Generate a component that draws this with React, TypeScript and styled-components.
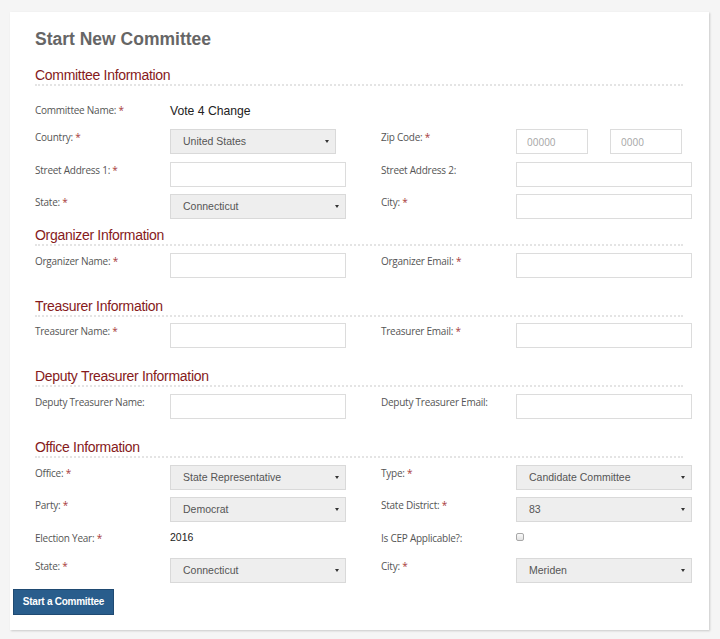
import React from "react";
import styled, { createGlobalStyle } from "styled-components";

const GlobalStyle = createGlobalStyle`
  html, body { margin: 0; padding: 0; background: #f5f5f5; }
  body { font-family: "Liberation Sans", Arial, sans-serif; }
  * { box-sizing: border-box; }
`;

const Card = styled.div`
  margin: 12px 11px 9px 10px;
  width: 699px;
  background: #fff;
  box-shadow: 1px 1px 2px rgba(0, 0, 0, 0.18);
  padding: 16px 17px 15px 3px;
`;

const Content = styled.div`
  padding-left: 22px;
`;

const Title = styled.h1`
  margin: 0 0 17px;
  font-family: "Liberation Sans", Arial, sans-serif;
  font-size: 17.5px;
  line-height: 22px;
  font-weight: bold;
  color: #666;
`;

const Section = styled.section<{ $top: number }>`
  margin-top: ${(p) => p.$top}px;
`;

const Heading = styled.h2`
  margin: 0 9px 0 0;
  font-family: "Liberation Sans", Arial, sans-serif;
  font-weight: normal;
  font-size: 14px;
  letter-spacing: -0.3px;
  line-height: 16px;
  color: #861a1b;
  padding-bottom: 1px;
  border-bottom: 2px dotted #e4e4e4;
`;

const Rows = styled.div<{ $top: number }>`
  margin-top: ${(p) => p.$top}px;
  display: flex;
  flex-direction: column;
  gap: 7.5px;
`;

const Row = styled.div<{ $h?: number }>`
  display: flex;
  gap: 35px;
  height: ${(p) => p.$h ?? 25}px;
`;

const Field = styled.div`
  display: flex;
  width: 311px;
`;

const Label = styled.div`
  width: 135px;
  flex: none;
  font-family: "Open Sans", sans-serif;
  font-size: 10px;
  letter-spacing: -0.25px;
  line-height: 14px;
  padding-top: 1px;
  color: #555;
`;

const Req = styled.span`
  color: #a83a3a;
`;

const Control = styled.div`
  width: 176px;
  display: flex;
  gap: 22px;
`;

const Input = styled.input<{ $w?: number }>`
  appearance: none;
  width: ${(p) => (p.$w ? `${p.$w}px` : "100%")};
  height: 25px;
  margin: 0;
  border: 1px solid #dcdcdc;
  background: #fff;
  padding: 0 10px;
  font-family: "Open Sans", sans-serif;
  font-size: 10px;
  color: #333;
  outline: none;
  &::placeholder { color: #a5a5a5; }
`;

const Select = styled.div<{ $w?: number }>`
  position: relative;
  width: ${(p) => (p.$w ? `${p.$w}px` : "100%")};
  height: 25px;
  border: 1px solid #d9d9d9;
  background: #eeeeee;
  padding: 0 12px;
  font-family: "Liberation Sans", Arial, sans-serif;
  font-size: 10.5px;
  line-height: 23px;
  color: #555;
`;

const Arrow = styled.span`
  position: absolute;
  right: 6px;
  top: 10px;
  width: 0;
  height: 0;
  border-left: 2px solid transparent;
  border-right: 2px solid transparent;
  border-top: 3px solid #333;
`;

const Value = styled.div<{ $size: number; $lh: number; $pt: number }>`
  font-family: "Liberation Sans", Arial, sans-serif;
  font-size: ${(p) => p.$size}px;
  line-height: ${(p) => p.$lh}px;
  padding-top: ${(p) => p.$pt}px;
  color: #222;
`;

const Check = styled.input`
  appearance: none;
  margin: 3px 0 0;
  width: 8px;
  height: 8px;
  border: 1px solid #a8a8a8;
  border-radius: 2px;
  background: linear-gradient(#fafafa, #e2e2e2);
`;

const Footer = styled.div`
  margin-top: 5.5px;
`;

const Button = styled.button`
  width: 101px;
  height: 26px;
  margin: 0;
  padding: 0;
  background: #295d8c;
  border: 1px solid #1f4a72;
  color: #fff;
  font-family: "Liberation Sans", Arial, sans-serif;
  font-weight: bold;
  font-size: 10px;
  letter-spacing: -0.25px;
  cursor: pointer;
`;

const L = ({ text, req }: { text: string; req?: boolean }) => (
  <Label>
    {text}
    {req && <Req> *</Req>}
  </Label>
);

const Sel = ({ value, w }: { value: string; w?: number }) => (
  <Select $w={w}>
    {value}
    <Arrow />
  </Select>
);

export default function App() {
  return (
    <>
      <GlobalStyle />
      <Card>
        <Content>
          <Title>Start New Committee</Title>

          <Section $top={0}>
            <Heading>Committee Information</Heading>
            <Rows $top={15.5}>
              <Row $h={20}>
                <Field>
                  <L text="Committee Name:" req />
                  <Value $size={12.2} $lh={14} $pt={2}>Vote 4 Change</Value>
                </Field>
              </Row>
              <Row>
                <Field>
                  <L text="Country:" req />
                  <Control>
                    <Sel value="United States" w={166} />
                  </Control>
                </Field>
                <Field>
                  <L text="Zip Code:" req />
                  <Control>
                    <Input $w={72} placeholder="00000" />
                    <Input $w={72} placeholder="0000" />
                  </Control>
                </Field>
              </Row>
              <Row>
                <Field>
                  <L text="Street Address 1:" req />
                  <Control>
                    <Input />
                  </Control>
                </Field>
                <Field>
                  <L text="Street Address 2:" />
                  <Control>
                    <Input />
                  </Control>
                </Field>
              </Row>
              <Row>
                <Field>
                  <L text="State:" req />
                  <Control>
                    <Sel value="Connecticut" />
                  </Control>
                </Field>
                <Field>
                  <L text="City:" req />
                  <Control>
                    <Input />
                  </Control>
                </Field>
              </Row>
            </Rows>
          </Section>

          <Section $top={8}>
            <Heading>Organizer Information</Heading>
            <Rows $top={6.5}>
              <Row>
                <Field>
                  <L text="Organizer Name:" req />
                  <Control>
                    <Input />
                  </Control>
                </Field>
                <Field>
                  <L text="Organizer Email:" req />
                  <Control>
                    <Input />
                  </Control>
                </Field>
              </Row>
            </Rows>
          </Section>

          <Section $top={20}>
            <Heading>Treasurer Information</Heading>
            <Rows $top={6.5}>
              <Row>
                <Field>
                  <L text="Treasurer Name:" req />
                  <Control>
                    <Input />
                  </Control>
                </Field>
                <Field>
                  <L text="Treasurer Email:" req />
                  <Control>
                    <Input />
                  </Control>
                </Field>
              </Row>
            </Rows>
          </Section>

          <Section $top={20}>
            <Heading>Deputy Treasurer Information</Heading>
            <Rows $top={6.5}>
              <Row>
                <Field>
                  <L text="Deputy Treasurer Name:" />
                  <Control>
                    <Input />
                  </Control>
                </Field>
                <Field>
                  <L text="Deputy Treasurer Email:" />
                  <Control>
                    <Input />
                  </Control>
                </Field>
              </Row>
            </Rows>
          </Section>

          <Section $top={20}>
            <Heading>Office Information</Heading>
            <Rows $top={7}>
              <Row>
                <Field>
                  <L text="Office:" req />
                  <Control>
                    <Sel value="State Representative" />
                  </Control>
                </Field>
                <Field>
                  <L text="Type:" req />
                  <Control>
                    <Sel value="Candidate Committee" />
                  </Control>
                </Field>
              </Row>
              <Row>
                <Field>
                  <L text="Party:" req />
                  <Control>
                    <Sel value="Democrat" />
                  </Control>
                </Field>
                <Field>
                  <L text="State District:" req />
                  <Control>
                    <Sel value="83" />
                  </Control>
                </Field>
              </Row>
              <Row $h={21}>
                <Field>
                  <L text="Election Year:" req />
                  <Value $size={10.5} $lh={11} $pt={2}>2016</Value>
                </Field>
                <Field>
                  <L text="Is CEP Applicable?:" />
                  <Control>
                    <Check type="checkbox" />
                  </Control>
                </Field>
              </Row>
              <Row>
                <Field>
                  <L text="State:" req />
                  <Control>
                    <Sel value="Connecticut" />
                  </Control>
                </Field>
                <Field>
                  <L text="City:" req />
                  <Control>
                    <Sel value="Meriden" />
                  </Control>
                </Field>
              </Row>
            </Rows>
          </Section>
        </Content>
        <Footer>
          <Button>Start a Committee</Button>
        </Footer>
      </Card>
    </>
  );
}
